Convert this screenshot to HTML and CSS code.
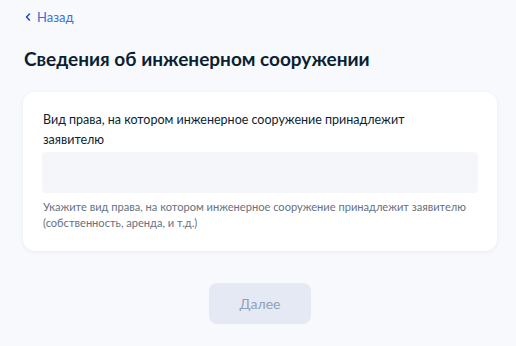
FILE: index.html
```html
<!DOCTYPE html>
<html lang="ru">
<head>
    <meta charset="UTF-8">
    <meta name="viewport" content="width=device-width, initial-scale=1.0">
    <title>Сведения об инженерном сооружении</title>
    <link rel="stylesheet" href="styles.css">
</head>
<body>
    <div class="page">
        <a class="back" href="#">
            <svg class="back-icon" width="8" height="8" viewBox="0 0 8 8"><path d="M5.5 1 L2.5 4 L5.5 7" fill="none" stroke="currentColor" stroke-width="1.5" stroke-linecap="round" stroke-linejoin="round"/></svg>
            Назад
        </a>

        <h1>Сведения об инженерном сооружении</h1>

        <div class="card">
            <label class="field-label" for="right">Вид права, на котором инженерное сооружение принадлежит заявителю</label>
            <input class="field-input" id="right" type="text">
            <div class="hint">Укажите вид права, на котором инженерное сооружение принадлежит заявителю (собственность, аренда, и т.д.)</div>
        </div>

        <div class="actions">
            <button class="next" disabled>Далее</button>
        </div>
    </div>
</body>
</html>
```

FILE: styles.css
```css
body {
    margin: 0;
    background: #f8f9fc;
    font-family: Lato, "Noto Sans", sans-serif;
    color: #0b1f33;
}
.page {
    width: 474px;
    padding: 5px 0 0 23px;
}
.back {
    display: inline-flex;
    align-items: center;
    gap: 5px;
    margin-left: 1px;
    color: #3b6fe0;
    font-size: 13px;
    line-height: 16px;
    text-decoration: none;
}
.back-icon {
    color: #0d4cd3;
}
h1 {
    margin: 22px 0 0 1px;
    font-size: 19px;
    line-height: 24px;
    font-weight: 700;
}
.card {
    margin-top: 21px;
    background: #fff;
    border-radius: 12px;
    box-shadow: 0 1px 4px rgba(26, 60, 130, 0.08);
    padding: 18px 19px 20px 19px;
}
.field-label {
    display: block;
    max-width: 400px;
    padding-left: 1px;
    font-size: 12.5px;
    line-height: 20px;
    color: #0b1f33;
}
.field-input {
    display: block;
    box-sizing: border-box;
    width: 100%;
    height: 41px;
    margin-top: 2px;
    border: none;
    border-radius: 4px;
    background: #f5f6fa;
}
.hint {
    margin-top: 6px;
    padding-left: 1px;
    font-size: 11.1px;
    line-height: 16px;
    color: #66727f;
}
.actions {
    display: flex;
    justify-content: center;
    margin-top: 32px;
}
.next {
    width: 102px;
    height: 41px;
    border: none;
    border-radius: 8px;
    background: #e4e9f4;
    color: #93a1b8;
    font-family: inherit;
    font-size: 14px;
}
```
